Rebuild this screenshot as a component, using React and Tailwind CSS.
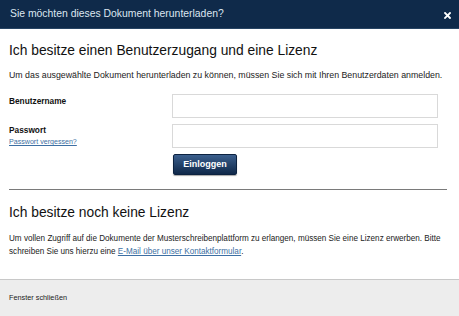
export default function App() {
  return (
    <div className="w-[459px] h-[316px] bg-white flex flex-col overflow-hidden" style={{ fontFamily: '"Liberation Sans", Arial, sans-serif' }}>
      <div className="h-[29px] shrink-0 bg-[#0f2a4a] border-b border-[#274463] flex items-center justify-between pl-[10px] pr-[8px]">
        <span className="text-[10.4px] text-[#dce6f0] leading-none">Sie möchten dieses Dokument herunterladen?</span>
        <svg width="7" height="7" viewBox="0 0 7 7" className="mt-[2px]">
          <path d="M1 1 L6 6 M6 1 L1 6" stroke="#ffffff" strokeWidth="1.8" strokeLinecap="square" />
        </svg>
      </div>
      <div className="flex-1 px-[9px]">
        <h2 className="mt-[12px] text-[13.8px] leading-[20px] text-[#111]">Ich besitze einen Benutzerzugang und eine Lizenz</h2>
        <p className="mt-[8px] text-[8.8px] leading-[13px] text-[#222]">Um das ausgewählte Dokument herunterladen zu können, müssen Sie sich mit Ihren Benutzerdaten anmelden.</p>
        <div className="mt-[12px] flex flex-col">
          <div className="flex h-[24px]">
            <div className="w-[163px] pt-[1px] text-[8.3px] font-bold leading-[12px] text-[#111]">Benutzername</div>
            <div className="w-[266px] h-[24px] border border-[#d9d9d9] bg-white"></div>
          </div>
          <div className="flex h-[24px] mt-[6px]">
            <div className="w-[163px] h-[24px] flex flex-col">
              <span className="text-[8.3px] font-bold leading-[12px] text-[#111]">Passwort</span>
              <a className="mt-[1px] text-[7.1px] leading-[10px] text-[#3d6fa3] underline">Passwort vergessen?</a>
            </div>
            <div className="w-[266px] h-[24px] border border-[#d9d9d9] bg-white"></div>
          </div>
          <div className="flex mt-[6px]">
            <div className="w-[164px]"></div>
            <button className="w-[64px] h-[21px] rounded-[2px] bg-gradient-to-b from-[#3b5f8d] to-[#10294a] text-white text-[9px] font-bold shadow-[0_1px_1px_rgba(0,0,0,0.35)] border border-[#0c2240]">Einloggen</button>
          </div>
        </div>
        <div className="mt-[14px] h-px bg-[#7a7a7a] mr-[3px]"></div>
        <h2 className="mt-[13px] text-[13.8px] leading-[20px] text-[#111]">Ich besitze noch keine Lizenz</h2>
        <p className="mt-[9px] text-[8.15px] leading-[13px] text-[#222]">
          Um vollen Zugriff auf die Dokumente der Musterschreibenplattform zu erlangen, müssen Sie eine Lizenz erwerben. Bitte schreiben Sie uns hierzu eine{' '}
          <a className="text-[#3d6fa3] underline">E-Mail über unser Kontaktformular</a>.
        </p>
      </div>
      <div className="h-[37px] shrink-0 bg-[#ededed] border-t border-[#c8c8c8] flex items-center px-[9px]">
        <span className="text-[7.3px] text-[#222]">Fenster schließen</span>
      </div>
    </div>
  );
}
